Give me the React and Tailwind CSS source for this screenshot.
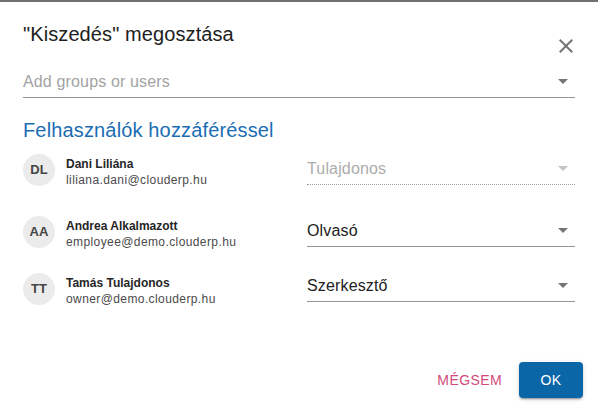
import React from "react";

const Arrow = ({ color }) => (
  <svg width="24" height="24" viewBox="0 0 24 24" className="shrink-0" style={{ marginTop: -3, marginBottom: -2 }}>
    <path d="M7 10l5 5 5-5z" fill={color} />
  </svg>
);

const users = [
  { init: "DL", name: "Dani Liliána", email: "liliana.dani@clouderp.hu", role: "Tulajdonos", disabled: true, mt: "mt-[12px]", smt: "mt-[5px]" },
  { init: "AA", name: "Andrea Alkalmazott", email: "employee@demo.clouderp.hu", role: "Olvasó", mt: "mt-[28px]", smt: "mt-[5px]" },
  { init: "TT", name: "Tamás Tulajdonos", email: "owner@demo.clouderp.hu", role: "Szerkesztő", mt: "mt-[23px]", smt: "mt-[3px]" },
];

export default function App() {
  return (
    <div className="w-[598px] h-[413px] bg-white flex flex-col font-['Liberation_Sans',Arial,sans-serif] overflow-hidden">
      <div className="h-[2px] bg-[#707070] shrink-0" />
      <div className="flex justify-between items-start pl-[23px] pr-[20px] pt-[20px] h-[44px]">
        <h2 className="text-[20px] leading-[24px] tracking-[0.1px] text-[#212121]">"Kiszedés" megosztása</h2>
        <svg width="24" height="24" viewBox="0 0 24 24" className="mt-[12px]">
          <path
            d="M19 6.41 17.59 5 12 10.59 6.41 5 5 6.41 10.59 12 5 17.59 6.41 19 12 13.41 17.59 19 19 17.59 13.41 12z"
            fill="#757575"
          />
        </svg>
      </div>
      <div className="mx-[23px] mt-[25px] h-[27px] pb-[6px] flex items-center justify-between border-b border-[#949494]">
        <span className="text-[16px] leading-[19px] tracking-[0.15px] text-[#a3a3a3]">Add groups or users</span>
        <Arrow color="#757575" />
      </div>
      <div className="mx-[23px] mt-[20px] text-[20px] leading-[24px] tracking-[0.15px] text-[#1a6db3]">
        Felhasználók hozzáféréssel
      </div>
      {users.map((u) => (
        <div key={u.init} className={`flex items-start px-[23px] ${u.mt}`}>
          <div className="w-[32px] h-[32px] rounded-full bg-[#ebebeb] flex items-center justify-center text-[13px] font-bold text-[#444444] shrink-0">
            {u.init}
          </div>
          <div className="ml-[11px] mt-[2px] flex flex-col">
            <span className="text-[12px] leading-[16px] font-bold text-[#262626]">{u.name}</span>
            <span className="text-[12px] leading-[16px] tracking-[0.4px] text-[#4a4a4a]">{u.email}</span>
          </div>
          <div
            className={`ml-auto w-[268px] h-[26px] pb-[6px] flex items-center justify-between ${u.smt} ${
              u.disabled ? "border-b border-dotted border-[#9e9e9e]" : "border-b border-[#949494]"
            }`}
          >
            <span
              className={`text-[16px] leading-[19px] tracking-[0.15px] ${u.disabled ? "text-[#acacac]" : "text-[#212121]"}`}
            >
              {u.role}
            </span>
            <Arrow color={u.disabled ? "#c4c4c4" : "#757575"} />
          </div>
        </div>
      ))}
      <div className="flex-1" />
      <div className="flex justify-end items-center pr-[15px] pb-[15px] gap-[9px]">
        <button className="h-[36px] px-[8px] text-[14px] leading-[24px] tracking-[0.4px] uppercase text-[#d24b7c]">
          Mégsem
        </button>
        <button className="h-[36px] min-w-[64px] px-[16px] rounded-[4px] bg-[#0b66a8] text-white text-[14px] leading-[24px] tracking-[0.4px] shadow-[0_3px_1px_-2px_rgba(0,0,0,0.2),0_2px_2px_0_rgba(0,0,0,0.14),0_1px_5px_0_rgba(0,0,0,0.12)]">
          OK
        </button>
      </div>
    </div>
  );
}
